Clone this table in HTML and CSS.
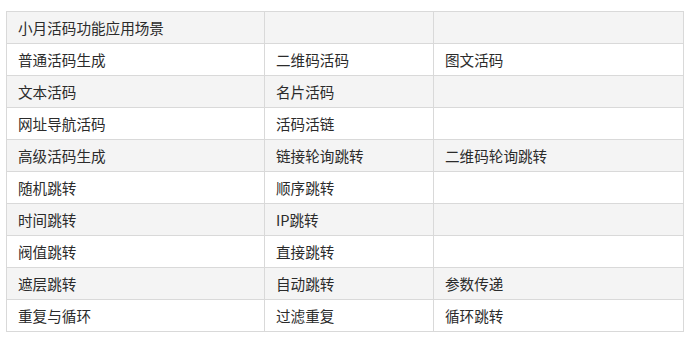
FILE: index.html
```html
<!DOCTYPE html>
<html>
<head>
<meta charset="utf-8">
<link rel="stylesheet" href="styles.css">
</head>
<body>
<table class="grid">
  <colgroup><col class="c1"><col class="c2"><col class="c3"></colgroup>
  <tr class="alt"><td>小月活码功能应用场景</td><td></td><td></td></tr>
  <tr><td>普通活码生成</td><td>二维码活码</td><td>图文活码</td></tr>
  <tr class="alt"><td>文本活码</td><td>名片活码</td><td></td></tr>
  <tr><td>网址导航活码</td><td>活码活链</td><td></td></tr>
  <tr class="alt"><td>高级活码生成</td><td>链接轮询跳转</td><td>二维码轮询跳转</td></tr>
  <tr><td>随机跳转</td><td>顺序跳转</td><td></td></tr>
  <tr class="alt"><td>时间跳转</td><td>IP跳转</td><td></td></tr>
  <tr><td>阀值跳转</td><td>直接跳转</td><td></td></tr>
  <tr class="alt"><td>遮层跳转</td><td>自动跳转</td><td>参数传递</td></tr>
  <tr><td>重复与循环</td><td>过滤重复</td><td>循环跳转</td></tr>
</table>
</body>
</html>
```
FILE: styles.css
```css
html, body { margin: 0; background: #fff; }
body { padding: 11px 0 0 6px; }
.grid {
  border-collapse: collapse;
  table-layout: fixed;
  width: 677px;
  font-family: "Noto Sans CJK SC", "Noto Sans", sans-serif;
  font-size: 14.6px;
  color: #2b2b2b;
}
.c1 { width: 258px; }
.c2 { width: 169px; }
.c3 { width: 250px; }
.grid td {
  border: 1px solid #d9d9d9;
  height: 32px;
  padding: 0 11px;
  box-sizing: border-box;
  vertical-align: middle;
  line-height: 16px;
}
.grid tr.alt td { background: #f4f4f4; }
```
